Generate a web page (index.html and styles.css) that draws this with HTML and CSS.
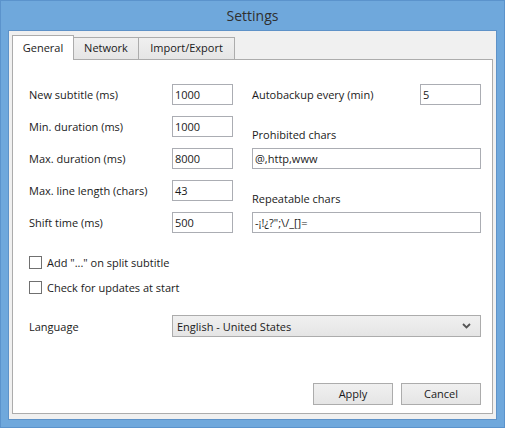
FILE: index.html
```html
<!DOCTYPE html>
<html>
<head>
<meta charset="utf-8">
<link rel="stylesheet" href="styles.css">
</head>
<body>
<div class="window">
  <div class="titlebar">Settings</div>
  <div class="client">
    <div class="tabs">
      <div class="tab tab-general active">General</div>
      <div class="tab tab-network">Network</div>
      <div class="tab tab-import">Import/Export</div>
    </div>
    <div class="panel">
      <div class="cols">
        <div class="col-left">
          <div class="row"><span class="label">New subtitle (ms)</span><div class="input short">1000</div></div>
          <div class="row"><span class="label">Min. duration (ms)</span><div class="input short">1000</div></div>
          <div class="row"><span class="label">Max. duration (ms)</span><div class="input short">8000</div></div>
          <div class="row"><span class="label">Max. line length (chars)</span><div class="input short">43</div></div>
          <div class="row"><span class="label">Shift time (ms)</span><div class="input short">500</div></div>
        </div>
        <div class="col-right">
          <div class="row"><span class="label">Autobackup every (min)</span><div class="input short">5</div></div>
          <div class="field">
            <div class="field-label">Prohibited chars</div>
            <div class="input wide">@,http,www</div>
          </div>
          <div class="field">
            <div class="field-label">Repeatable chars</div>
            <div class="input wide">-¡!¿?";\/_[]=</div>
          </div>
        </div>
      </div>
      <div class="checks">
        <div class="check"><span class="box"></span><span>Add "..." on split subtitle</span></div>
        <div class="check"><span class="box"></span><span>Check for updates at start</span></div>
      </div>
      <div class="lang-row">
        <span class="label">Language</span>
        <div class="select">
          <span>English - United States</span>
          <svg class="chevron" width="9" height="6" viewBox="0 0 9 6"><path d="M1 1 L4.5 4.5 L8 1" fill="none" stroke="#555" stroke-width="1.8"/></svg>
        </div>
      </div>
      <div class="buttons">
        <div class="button">Apply</div>
        <div class="button">Cancel</div>
      </div>
    </div>
  </div>
</div>
</body>
</html>
```

FILE: styles.css
```css
* { box-sizing: border-box; }
html, body { margin: 0; padding: 0; }
body {
  width: 505px;
  height: 428px;
  font-family: "Open Sans", "Noto Sans", sans-serif;
  font-size: 11px;
  color: #1a1a1a;
  overflow: hidden;
}
.window {
  width: 505px;
  height: 428px;
  background: #6fa8dc;
  border: 1px solid #5b93cc;
  display: flex;
  flex-direction: column;
}
.titlebar {
  height: 29px;
  line-height: 29px;
  text-align: center;
  font-size: 14px;
  color: #2f2f2f;
}
.client {
  flex: 1;
  margin: 0 7px 7px 7px;
  background: #f0f0f0;
  border: 1px solid #5e92c8;
  padding: 4px 4px 5px 3px;
  display: flex;
  flex-direction: column;
}
.tabs {
  display: flex;
  align-items: flex-end;
  height: 25px;
  margin-bottom: -1px;
  position: relative;
  z-index: 1;
}
.tab {
  height: 22px;
  margin-bottom: 1px;
  border: 1px solid #acacac;
  border-bottom: none;
  background: linear-gradient(#f0f0f0, #e5e5e5);
  text-align: center;
  line-height: 20px;
  margin-left: -1px;
}
.tab-general { width: 62px; margin-left: 0; }
.tab-network { width: 66px; }
.tab-import { width: 97px; }
.tab.active {
  height: 25px;
  margin-bottom: 0;
  background: #fff;
  line-height: 23px;
  position: relative;
  z-index: 2;
}
.panel {
  flex: 1;
  width: 481px;
  background: #fff;
  border: 1px solid #acacac;
  padding: 24px 11px 8px 16px;
  display: flex;
  flex-direction: column;
}
.cols {
  display: flex;
}
.col-left {
  width: 204px;
  display: flex;
  flex-direction: column;
  gap: 11px;
}
.col-right {
  flex: 1;
  margin-left: 19px;
  display: flex;
  flex-direction: column;
}
.row {
  display: flex;
  align-items: center;
  height: 21px;
}
.row .label { flex: 1; }
.input {
  height: 21px;
  border: 1px solid #abadb3;
  background: #fff;
  padding-left: 2px;
  line-height: 19px;
  white-space: nowrap;
}
.input.short { width: 61px; }
.input.wide { width: 100%; }
.field { margin-top: 22px; }
.field-label {
  height: 16px;
  line-height: 16px;
  margin-bottom: 5px;
}
.checks {
  margin-top: 23px;
  display: flex;
  flex-direction: column;
  gap: 12px;
}
.check {
  display: flex;
  align-items: center;
  height: 13px;
  gap: 5px;
}
.box {
  width: 13px;
  height: 13px;
  border: 1px solid #707070;
  background: #fff;
}
.lang-row {
  margin-top: 21px;
  display: flex;
  align-items: center;
  height: 22px;
}
.lang-row .label { width: 143px; }
.select {
  flex: 1;
  height: 22px;
  border: 1px solid #acacac;
  background: linear-gradient(#f0f0f0, #e5e5e5);
  display: flex;
  align-items: center;
  justify-content: space-between;
  padding: 0 9px 0 4px;
}
.chevron { display: block; }
.buttons {
  margin-top: auto;
  display: flex;
  justify-content: flex-end;
  gap: 8px;
}
.button {
  width: 80px;
  height: 22px;
  border: 1px solid #acacac;
  background: linear-gradient(#f0f0f0, #e5e5e5);
  text-align: center;
  line-height: 20px;
}
```
